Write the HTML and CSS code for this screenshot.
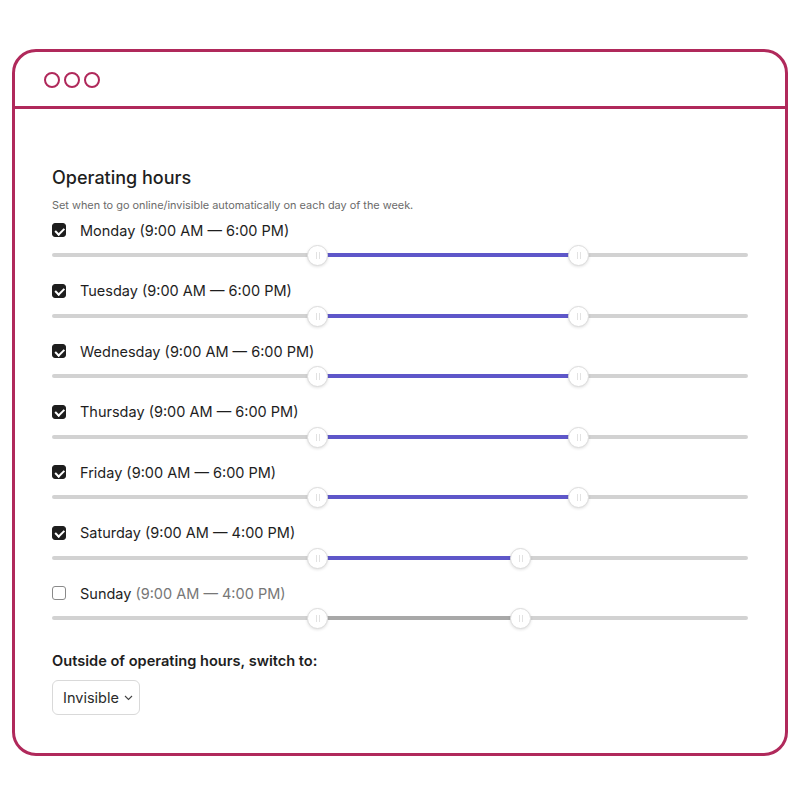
FILE: index.html
```html
<!DOCTYPE html>
<html lang="en">
  <head>
    <meta charset="UTF-8" />
    <meta name="viewport" content="width=device-width, initial-scale=1.0" />
    <title>Operating hours</title>
    <link rel="stylesheet" href="styles.css">
  </head>
  <body>
    <div class="window">
      <div class="window-bar">
        <svg width="60" height="18" viewBox="0 0 60 18">
          <circle cx="9" cy="9" r="7" fill="none" stroke="#b0295b" stroke-width="2" />
          <circle cx="29" cy="9" r="7" fill="none" stroke="#b0295b" stroke-width="2" />
          <circle cx="49" cy="9" r="7" fill="none" stroke="#b0295b" stroke-width="2" />
        </svg>
      </div>

      <div class="window-body">
        <h2>Operating hours</h2>
        <p class="hint">Set when to go online/invisible automatically on each day of the week.</p>

        <!-- Days -->
        <div class="day">
          <label class="day-label"><span class="check checked"></span>Monday (9:00 AM — 6:00 PM)</label>
          <div class="slider">
            <div class="track"><div class="fill" style="left: 38.07%; width: 37.5%"></div></div>
            <span class="thumb" style="left: 38.07%"></span>
            <span class="thumb" style="left: 75.57%"></span>
          </div>
        </div>
        <div class="day">
          <label class="day-label"><span class="check checked"></span>Tuesday (9:00 AM — 6:00 PM)</label>
          <div class="slider">
            <div class="track"><div class="fill" style="left: 38.07%; width: 37.5%"></div></div>
            <span class="thumb" style="left: 38.07%"></span>
            <span class="thumb" style="left: 75.57%"></span>
          </div>
        </div>
        <div class="day">
          <label class="day-label"><span class="check checked"></span>Wednesday (9:00 AM — 6:00 PM)</label>
          <div class="slider">
            <div class="track"><div class="fill" style="left: 38.07%; width: 37.5%"></div></div>
            <span class="thumb" style="left: 38.07%"></span>
            <span class="thumb" style="left: 75.57%"></span>
          </div>
        </div>
        <div class="day">
          <label class="day-label"><span class="check checked"></span>Thursday (9:00 AM — 6:00 PM)</label>
          <div class="slider">
            <div class="track"><div class="fill" style="left: 38.07%; width: 37.5%"></div></div>
            <span class="thumb" style="left: 38.07%"></span>
            <span class="thumb" style="left: 75.57%"></span>
          </div>
        </div>
        <div class="day">
          <label class="day-label"><span class="check checked"></span>Friday (9:00 AM — 6:00 PM)</label>
          <div class="slider">
            <div class="track"><div class="fill" style="left: 38.07%; width: 37.5%"></div></div>
            <span class="thumb" style="left: 38.07%"></span>
            <span class="thumb" style="left: 75.57%"></span>
          </div>
        </div>
        <div class="day">
          <label class="day-label"><span class="check checked"></span>Saturday (9:00 AM — 4:00 PM)</label>
          <div class="slider">
            <div class="track"><div class="fill" style="left: 38.07%; width: 29.17%"></div></div>
            <span class="thumb" style="left: 38.07%"></span>
            <span class="thumb" style="left: 67.24%"></span>
          </div>
        </div>
        <div class="day off">
          <label class="day-label"><span class="check"></span>Sunday <span class="muted">(9:00 AM — 4:00 PM)</span></label>
          <div class="slider">
            <div class="track"><div class="fill" style="left: 38.07%; width: 29.17%"></div></div>
            <span class="thumb" style="left: 38.07%"></span>
            <span class="thumb" style="left: 67.24%"></span>
          </div>
        </div>

        <div class="outside">
          <div class="outside-title">Outside of operating hours, switch to:</div>
          <div class="select">
            <span>Invisible</span>
            <svg width="9" height="6" viewBox="0 0 9 6"><path d="M1 1l3.5 3.5L8 1" fill="none" stroke="#444" stroke-width="1.1" /></svg>
          </div>
        </div>
      </div>
    </div>
  </body>
</html>
```

FILE: styles.css
```css
body {
  margin: 0;
  font-family: Inter, "Noto Sans", Arial, sans-serif;
  background-color: white;
  color: #1e1e1e;
}
.window {
  box-sizing: border-box;
  width: 776px;
  height: 707px;
  margin: 49px 12px 0;
  border: 3px solid #b0295b;
  border-radius: 24px;
  overflow: hidden;
}
.window-bar {
  height: 57px;
  display: flex;
  align-items: center;
  padding-left: 28px;
  padding-top: 1px;
  box-sizing: border-box;
  border-bottom: 3px solid #b0295b;
}
.window-bar svg {
  display: block;
}
.window-body {
  padding: 58px 37px 0;
}
h2 {
  margin: 0;
  font-size: 18px;
  line-height: 22px;
  font-weight: 500;
  color: #1e1e1e;
}
.hint {
  margin: 9px 0 8px;
  font-size: 10.9px;
  line-height: 14px;
  color: #6b6b6b;
}
.day {
  margin-bottom: 15.5px;
}
.day-label {
  display: flex;
  align-items: center;
  height: 20px;
  font-size: 14.5px;
  color: #1e1e1e;
  margin-bottom: 5px;
}
.muted {
  color: #777;
  margin-left: 4px;
}
.check {
  box-sizing: border-box;
  width: 14px;
  height: 14px;
  border-radius: 3px;
  border: 1px solid #8a8a8a;
  background-color: white;
  margin-right: 14px;
  position: relative;
}
.check.checked {
  background-color: #1e1e1e;
  border-color: #1e1e1e;
}
.check.checked::after {
  content: "";
  position: absolute;
  left: 3.5px;
  top: 1.5px;
  width: 3.5px;
  height: 6.5px;
  border: solid white;
  border-width: 0 2px 2px 0;
  transform: rotate(45deg);
}
.slider {
  position: relative;
  height: 20px;
  padding-top: 8px;
  box-sizing: border-box;
}
.track {
  position: relative;
  height: 4px;
  border-radius: 2px;
  background-color: #d2d2d2;
}
.fill {
  position: absolute;
  top: 0;
  height: 4px;
  background-color: #5e57c9;
}
.off .fill {
  background-color: #a8a8a8;
}
.thumb {
  position: absolute;
  top: 0;
  box-sizing: border-box;
  width: 21px;
  height: 21px;
  margin-left: -10px;
  border-radius: 50%;
  background-color: white;
  border: 1px solid #dcdcdc;
  box-shadow: 0 1px 3px rgba(0, 0, 0, 0.12);
}
.thumb::before,
.thumb::after {
  content: "";
  position: absolute;
  top: 6px;
  width: 1px;
  height: 7px;
  background-color: #e2e2e2;
}
.thumb::before {
  left: 8px;
}
.thumb::after {
  left: 11px;
}
.outside {
  padding-top: 7px;
}
.outside-title {
  font-size: 14.6px;
  font-weight: 600;
  line-height: 20px;
  margin-bottom: 9px;
}
.select {
  box-sizing: border-box;
  display: inline-flex;
  align-items: center;
  gap: 5px;
  height: 35px;
  padding: 0 6px 0 10px;
  border: 1px solid #d9d9d9;
  border-radius: 6px;
  font-size: 14.5px;
  color: #2a2a2a;
}
.select svg {
  display: block;
  margin-top: 1px;
}
```
